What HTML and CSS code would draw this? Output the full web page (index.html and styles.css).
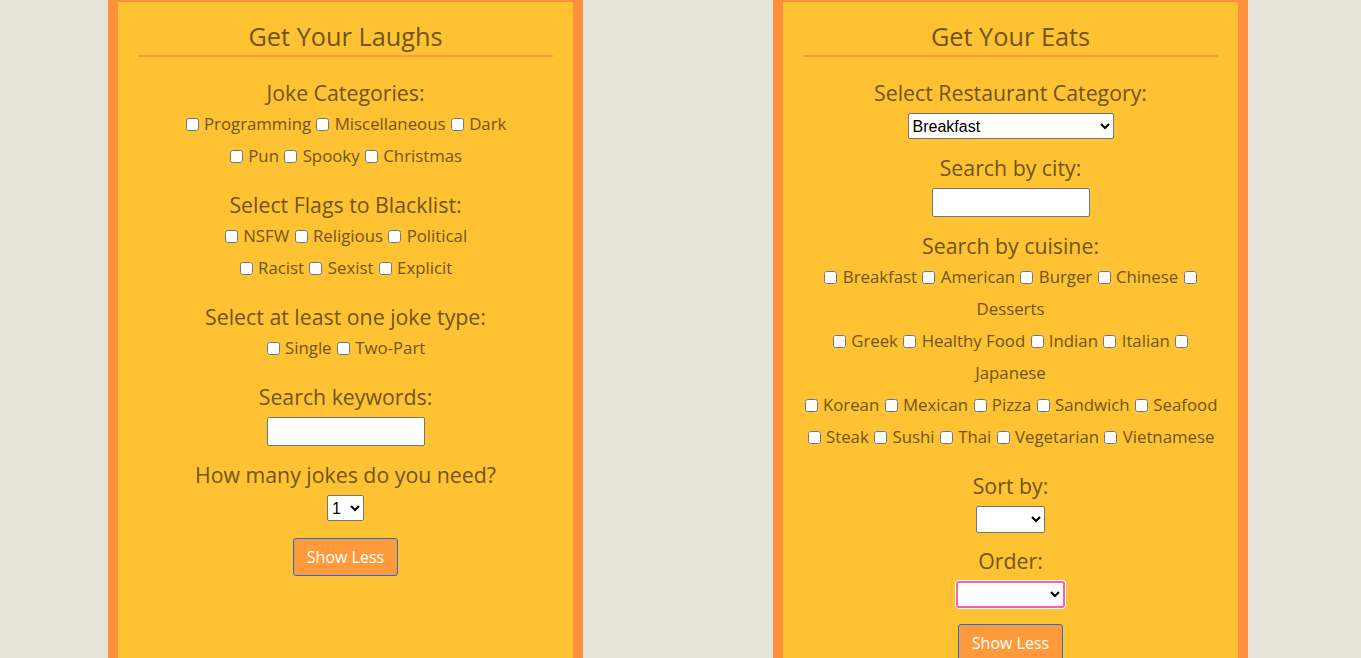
FILE: index.html
```html
<!DOCTYPE html>
<html lang="en">
<head>
<meta charset="utf-8">
<title>Get Your Laughs &amp; Eats</title>
<link rel="stylesheet" href="styles.css">
</head>
<body>
<main class="page">
  <section class="card">
    <h2 class="card-title">Get Your Laughs</h2>

    <div class="group checks">
      <p class="label">Joke Categories:</p>
      <div class="row"><input type="checkbox"> Programming <input type="checkbox"> Miscellaneous <input type="checkbox"> Dark</div>
      <div class="row"><input type="checkbox"> Pun <input type="checkbox"> Spooky <input type="checkbox"> Christmas</div>
    </div>

    <div class="group checks">
      <p class="label">Select Flags to Blacklist:</p>
      <div class="row"><input type="checkbox"> NSFW <input type="checkbox"> Religious <input type="checkbox"> Political</div>
      <div class="row"><input type="checkbox"> Racist <input type="checkbox"> Sexist <input type="checkbox"> Explicit</div>
    </div>

    <div class="group checks">
      <p class="label">Select at least one joke type:</p>
      <div class="row"><input type="checkbox"> Single <input type="checkbox"> Two-Part</div>
    </div>

    <div class="group field">
      <p class="label">Search keywords:</p>
      <input class="text-input" type="text">
    </div>

    <div class="group field last">
      <p class="label">How many jokes do you need?</p>
      <select class="select select-num"><option>1</option></select>
    </div>

    <button class="btn" type="button">Show Less</button>
  </section>

  <section class="card">
    <h2 class="card-title">Get Your Eats</h2>

    <div class="group field">
      <p class="label">Select Restaurant Category:</p>
      <select class="select select-cat"><option>Breakfast</option></select>
    </div>

    <div class="group field">
      <p class="label">Search by city:</p>
      <input class="text-input" type="text">
    </div>

    <div class="group checks">
      <p class="label">Search by cuisine:</p>
      <div class="row"><input type="checkbox"> Breakfast <input type="checkbox"> American <input type="checkbox"> Burger <input type="checkbox"> Chinese <input type="checkbox"></div>
      <div class="row">Desserts</div>
      <div class="row"><input type="checkbox"> Greek <input type="checkbox"> Healthy Food <input type="checkbox"> Indian <input type="checkbox"> Italian <input type="checkbox"></div>
      <div class="row">Japanese</div>
      <div class="row"><input type="checkbox"> Korean <input type="checkbox"> Mexican <input type="checkbox"> Pizza <input type="checkbox"> Sandwich <input type="checkbox"> Seafood</div>
      <div class="row"><input type="checkbox"> Steak <input type="checkbox"> Sushi <input type="checkbox"> Thai <input type="checkbox"> Vegetarian <input type="checkbox"> Vietnamese</div>
    </div>

    <div class="group field tight">
      <p class="label">Sort by:</p>
      <select class="select select-sort"><option></option></select>
    </div>

    <div class="group field last-r">
      <p class="label">Order:</p>
      <select class="select select-order"><option></option></select>
    </div>

    <button class="btn" type="button">Show Less</button>
  </section>
</main>
</body>
</html>
```

FILE: styles.css
```css
html, body {
  margin: 0;
  padding: 0;
  background: #e6e3d8;
  height: 100%;
  overflow: hidden;
}

.page {
  display: flex;
  align-items: stretch;
  gap: 190px;
  padding-left: 108px;
  min-height: 700px;
  font-family: "Open Sans", "DejaVu Sans", sans-serif;
  color: #6f5519;
}

.card {
  width: 415px;
  background: #ffc233;
  border: 10px solid #ff913d;
  border-top-width: 2px;
  padding: 19px 20px 40px;
  display: flex;
  flex-direction: column;
  align-items: center;
  text-align: center;
}

.card-title {
  align-self: stretch;
  margin: 0 0 21px;
  padding-bottom: 4px;
  border-bottom: 2px solid #ff9a3c;
  font-size: 25.3px;
  line-height: 30px;
  font-weight: 400;
}

.group {
  display: flex;
  flex-direction: column;
  align-items: center;
  align-self: stretch;
}

.group.checks { margin-bottom: 18px; }
.group.field { margin-bottom: 14px; }
.group.tight { margin-bottom: 13px; }
.group.last { margin-bottom: 17px; }
.group.last-r { margin-bottom: 16px; }

.label {
  margin: 0;
  font-size: 21.3px;
  line-height: 30px;
}

.field .label { margin-bottom: 5px; }

.row {
  font-size: 16.8px;
  line-height: 32px;
  white-space: nowrap;
}

.row input[type="checkbox"] {
  width: 13px;
  height: 13px;
  margin: 0 1px 0 1px;
  vertical-align: -1px;
}

.text-input {
  box-sizing: border-box;
  width: 158px;
  height: 29px;
  border: 1px solid #767676;
  border-radius: 2px;
  background: #fff;
  margin: 0;
}

.select {
  box-sizing: border-box;
  height: 26px;
  margin: 0;
  border: 1px solid #767676;
  border-radius: 2px;
  background: #fff;
  color: #000;
  font-family: "Liberation Sans", Arial, sans-serif;
  font-size: 16px;
}

.select-num { width: 37px; }
.select-cat { width: 206px; }
.select-sort { width: 69px; height: 27px; }
.select-order {
  width: 109px;
  height: 27px;
  border: 2px solid #ff5eae;
  border-radius: 3px;
  box-shadow: 0 0 0 1px #fff;
}

.btn {
  box-sizing: border-box;
  width: 105px;
  height: 38px;
  padding: 0;
  background: #ff9a3c;
  color: #fff;
  border: 1px solid #1a6fe0;
  border-radius: 3px;
  font-family: "Open Sans", "DejaVu Sans", sans-serif;
  font-size: 16px;
}
```
